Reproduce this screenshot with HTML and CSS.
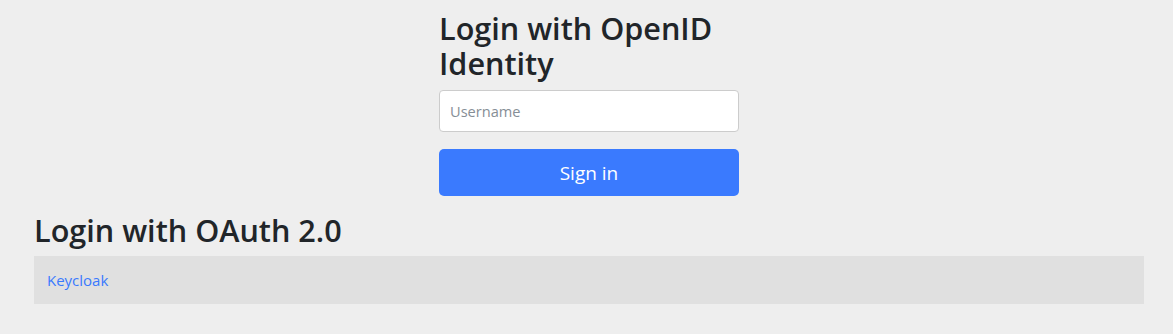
FILE: index.html
```html
<!DOCTYPE html>
<html lang="en">
<head>
    <meta charset="UTF-8">
    <meta name="viewport" content="width=device-width, initial-scale=1.0">
    <title>Login</title>
    <link rel="stylesheet" href="styles.css">
</head>
<body>
    <div class="container">
        <!-- OpenID -->
        <form class="login-form">
            <h2 class="form-title">Login with OpenID Identity</h2>
            <input type="text" class="form-input" placeholder="Username">
            <button type="button" class="btn-primary">Sign in</button>
        </form>

        <!-- OAuth -->
        <h2 class="section-title">Login with OAuth 2.0</h2>
        <div class="provider-list">
            <a href="#" class="provider-link">Keycloak</a>
        </div>
    </div>
</body>
</html>
```

FILE: styles.css
```css
* {
    margin: 0;
    padding: 0;
    box-sizing: border-box;
}

body {
    background: #eeeeee;
    color: #212529;
    font-family: 'Open Sans', 'Noto Sans', sans-serif;
    font-size: 16px;
}

.container {
    width: 1110px;
    margin-left: 34px;
    padding-top: 11px;
}

.login-form {
    width: 300px;
    margin: 0 auto;
    display: flex;
    flex-direction: column;
}

.form-title,
.section-title {
    font-size: 30.6px;
    font-weight: 600;
    line-height: 35px;
}

.form-title {
    margin-bottom: 9px;
}

.form-input {
    height: 42px;
    padding: 0 10px;
    border: 1px solid #cccccc;
    border-radius: 4px;
    background: white;
    font-family: inherit;
    font-size: 14.6px;
    color: #212529;
}

.form-input::placeholder {
    color: #868e96;
}

.btn-primary {
    margin-top: 17px;
    height: 47px;
    border: none;
    border-radius: 5px;
    background: #3a7afe;
    color: white;
    font-family: inherit;
    font-size: 19px;
}

.section-title {
    margin-top: 17px;
    margin-bottom: 8px;
}

.provider-list {
    background: #e0e0e0;
    height: 48px;
    padding: 0 13px;
    display: flex;
    align-items: center;
}

.provider-link {
    color: #3a7afe;
    font-size: 15px;
    text-decoration: none;
}
```
